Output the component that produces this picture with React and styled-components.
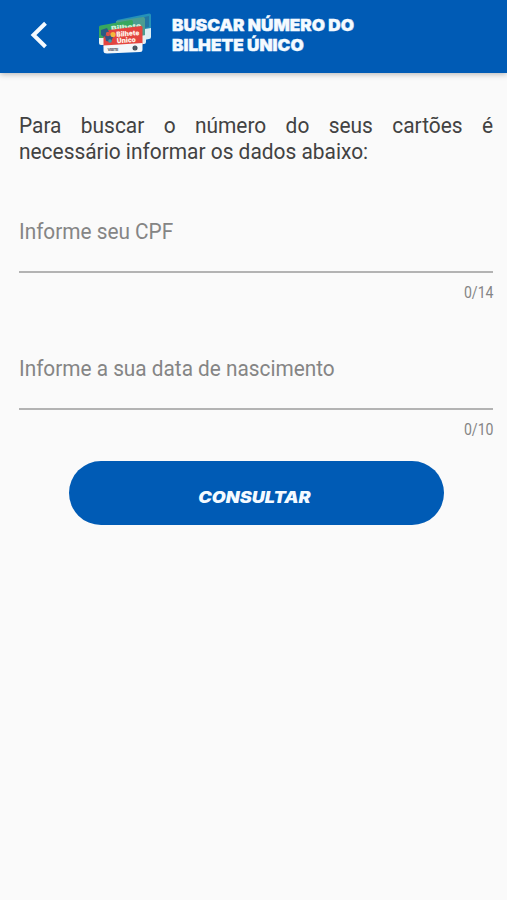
import React from 'react';
import styled, { createGlobalStyle } from 'styled-components';

const GlobalStyle = createGlobalStyle`
  body {
    margin: 0;
    background: #fafafa;
    font-family: Roboto, 'Liberation Sans', sans-serif;
  }
  * { box-sizing: border-box; }
`;

const Page = styled.div`
  height: 900px;
  overflow: hidden;
  background: #fafafa;
`;

const Header = styled.header`
  height: 73px;
  display: flex;
  align-items: flex-start;
  padding-left: 30px;
  background: #005bb5;
  box-shadow: 0 1px 6px rgba(0, 0, 0, .3);
`;

const BackButton = styled.button`
  width: 18px;
  height: 28px;
  margin: 21px 49px 0 0;
  padding: 0;
  border: 0;
  background: none;
  svg { display: block; }
`;

const Cards = styled.svg`
  display: block;
  flex: none;
  margin-top: 12px;
`;

const Title = styled.h1`
  margin: 15px 0 0 19px;
  font: 900 16px/20px Inter, sans-serif;
  color: #f4faff;
  white-space: nowrap;
  -webkit-text-stroke: .4px #f4faff;
  transform: scaleX(1.07);
  transform-origin: left;
`;

const TitleLine = styled.span`
  display: block;
`;

const Form = styled.main`
  display: flex;
  flex-direction: column;
  padding: 40px 14px 0 18.5px;
`;

// Roboto set slightly condensed
const Intro = styled.p`
  width: 499px;
  margin: 0;
  font-size: 22px;
  line-height: 26px;
  text-align: justify;
  color: #424242;
  transform: scaleX(.95);
  transform-origin: left;
`;

const Field = styled.label`
  display: block;
  height: 137px;
  padding-top: 54px;
`;

const Label = styled.div`
  height: 53.5px;
  border-bottom: 2px solid #b3b3b3;
`;

const LabelText = styled.span`
  display: block;
  font-size: 22px;
  line-height: 26px;
  color: #858585;
  transform: scaleX(.945);
  transform-origin: left;
`;

const Counter = styled.div`
  margin-top: 10.5px;
  font-size: 16px;
  line-height: 20px;
  text-align: right;
  color: #858585;
  transform: scaleX(.88);
  transform-origin: right;
`;

const Submit = styled.button`
  width: 375px;
  height: 64px;
  margin: 22px 0 0 50px;
  padding: 7px 4px 0 0;
  border: 0;
  border-radius: 32px;
  background: #005bb5;
  color: #f4faff;
  font: italic 900 16px/20px Inter, sans-serif;
`;

const SubmitText = styled.span`
  display: block;
  transform: scaleX(1.13);
`;

const BackIcon = () => (
  <svg width="18" height="28" viewBox="0 0 18 28">
    <path d="M15.5 2.2 3.5 14l12 11.8" fill="none" stroke="#f4faff" strokeWidth="4" />
  </svg>
);

// The three overlapping transport cards
const CardsIcon = () => (
  <Cards width="56" height="44" viewBox="0 0 56 44">
    <path d="M20 8 52 1.5q2-.2 2 1.5v16q0 2-2 2L20 24z" fill="#2592b8" />
    <path d="m48 17 6-1v9q0 2-2 2l-5 1z" fill="#dceef3" />
    <path d="m29 9 23-5v11l-12 3z" fill="#2376a4" />
    <path d="M19 9 46 5q2-.2 2 2v20q0 2-2 2L19 30z" fill="#4c9d91" />
    <path d="m43 24 6-1v7q0 2-2 2h-4z" fill="#e5eff2" />
    <path d="M3.5 13.5 34 8q2-.2 2 2v19L2 31V15q0-1.2 1.5-1.5z" fill="#38a75e" />
    <path d="M2 26h6v7H4q-2 0-2-2z" fill="#edf5f3" />
    <g transform="rotate(-6 28 15)">
      <text x="14" y="17" fill="#d4efdb" fontFamily="Inter, sans-serif" fontSize="6" fontWeight="900" textLength="30" lengthAdjust="spacingAndGlyphs">Bilhete</text>
    </g>
    <path d="M8 18.5 44 14q1.5-.2 1.5 1.5V33L6.5 35V20q0-1.3 1.5-1.5z" fill="#e3453f" />
    <path d="M6.5 33.5 45.5 31v6.5q0 2.5-2.5 2.5L10 41.5q-3.5 0-3.5-2.5z" fill="#f3f7fa" />
    <path d="m4 18 6-2 2 4-5 5-3-2z" fill="#295b85" />
    <path d="m8 24 4-3 4 4-2 5-5-1z" fill="#365283" />
    <circle cx="11" cy="22" r="2.2" fill="#d95149" />
    <circle cx="16" cy="22.5" r="2.6" fill="#f3b83c" />
    <circle cx="13" cy="29" r="1.8" fill="#3d9ba8" />
    <g transform="rotate(-4 30 24)" fill="#fff2e9" fontFamily="Inter, sans-serif" fontWeight="900">
      <text x="19.5" y="24" fontSize="7" textLength="23" lengthAdjust="spacingAndGlyphs">Bilhete</text>
      <text x="19.5" y="30.5" fontSize="7" textLength="19" lengthAdjust="spacingAndGlyphs">Único</text>
    </g>
    <text x="10.5" y="39" fill="#4d5860" fontFamily="Inter, sans-serif" fontSize="4" fontWeight="700" textLength="11">VISITE</text>
    <circle cx="38" cy="36" r="2.5" fill="#394551" />
    <path d="M36.5 35h3M36.5 37h3" stroke="#83909a" strokeWidth=".6" />
  </Cards>
);

const InputField = ({ label, count }) => (
  <Field>
    <Label><LabelText>{label}</LabelText></Label>
    <Counter>{count}</Counter>
  </Field>
);

const App = () => (
  <Page>
    <GlobalStyle />
    <Header>
      <BackButton aria-label="Voltar"><BackIcon /></BackButton>
      <CardsIcon />
      <Title>
        <TitleLine>BUSCAR NÚMERO DO</TitleLine>
        <TitleLine>BILHETE ÚNICO</TitleLine>
      </Title>
    </Header>
    <Form>
      <Intro>Para buscar o número do seus cartões é necessário informar os dados abaixo:</Intro>
      <InputField label="Informe seu CPF" count="0/14" />
      <InputField label="Informe a sua data de nascimento" count="0/10" />
      <Submit><SubmitText>CONSULTAR</SubmitText></Submit>
    </Form>
  </Page>
);

export default App;
